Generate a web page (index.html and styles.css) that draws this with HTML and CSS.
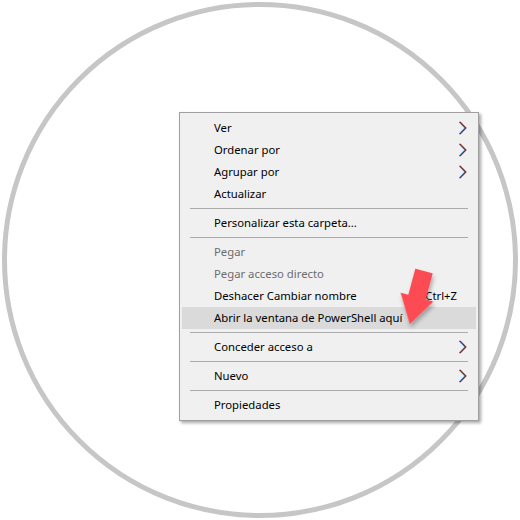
FILE: index.html
```html
<!DOCTYPE html>
<html lang="es">
<head>
  <meta charset="UTF-8" />
  <title>Menú contextual</title>
  <link rel="stylesheet" href="styles.css">
</head>
<body>

<div class="frame">
  <div class="circle">
    <div class="menu">
      <div class="item">
        <span class="label">Ver</span>
        <span class="key"></span>
        <svg class="chev" width="10" height="14" viewBox="0 0 10 14"><polyline points="1.2,0.8 7.2,7 1.2,13.2" class="chev-b"/><polyline points="2,0.8 8,7 2,13.2" class="chev-r"/></svg>
      </div>
      <div class="item">
        <span class="label">Ordenar por</span>
        <span class="key"></span>
        <svg class="chev" width="10" height="14" viewBox="0 0 10 14"><polyline points="1.2,0.8 7.2,7 1.2,13.2" class="chev-b"/><polyline points="2,0.8 8,7 2,13.2" class="chev-r"/></svg>
      </div>
      <div class="item">
        <span class="label">Agrupar por</span>
        <span class="key"></span>
        <svg class="chev" width="10" height="14" viewBox="0 0 10 14"><polyline points="1.2,0.8 7.2,7 1.2,13.2" class="chev-b"/><polyline points="2,0.8 8,7 2,13.2" class="chev-r"/></svg>
      </div>
      <div class="item">
        <span class="label">Actualizar</span>
      </div>
      <div class="sep"></div>
      <div class="item">
        <span class="label">Personalizar esta carpeta...</span>
      </div>
      <div class="sep"></div>
      <div class="item disabled">
        <span class="label">Pegar</span>
      </div>
      <div class="item disabled">
        <span class="label">Pegar acceso directo</span>
      </div>
      <div class="item">
        <span class="label">Deshacer Cambiar nombre</span>
        <span class="key">Ctrl+Z</span>
      </div>
      <div class="item active">
        <span class="label">Abrir la ventana de PowerShell aquí</span>
      </div>
      <div class="sep"></div>
      <div class="item">
        <span class="label">Conceder acceso a</span>
        <span class="key"></span>
        <svg class="chev" width="10" height="14" viewBox="0 0 10 14"><polyline points="1.2,0.8 7.2,7 1.2,13.2" class="chev-b"/><polyline points="2,0.8 8,7 2,13.2" class="chev-r"/></svg>
      </div>
      <div class="sep"></div>
      <div class="item">
        <span class="label">Nuevo</span>
        <span class="key"></span>
        <svg class="chev" width="10" height="14" viewBox="0 0 10 14"><polyline points="1.2,0.8 7.2,7 1.2,13.2" class="chev-b"/><polyline points="2,0.8 8,7 2,13.2" class="chev-r"/></svg>
      </div>
      <div class="sep"></div>
      <div class="item">
        <span class="label">Propiedades</span>
      </div>
    </div>
  </div>

  <!-- flecha roja encima del menú -->
  <svg class="arrow" width="70" height="80" viewBox="0 0 70 80">
    <defs>
      <filter id="sombra" x="-30%" y="-30%" width="160%" height="160%">
        <feDropShadow dx="2" dy="3" stdDeviation="2" flood-color="#000" flood-opacity="0.3"/>
      </filter>
    </defs>
    <g transform="translate(29 7) rotate(15)" filter="url(#sombra)">
      <polygon points="-9,0 9,0 9,27 17,27 0,55 -17,27 -9,27" fill="#fd4b53"/>
    </g>
  </svg>
</div>

</body>
</html>
```

FILE: styles.css
```css
body {
  margin: 0;
  padding: 0;
  background: #ffffff;
  font-family: 'Noto Sans', 'Open Sans', sans-serif;
}

.frame {
  position: relative;
  width: 520px;
  height: 520px;
}

.circle {
  box-sizing: border-box;
  width: 516px;
  height: 516px;
  margin: 2px;
  border: 5px solid #c6c6c6;
  border-radius: 50%;
  background: #fff;
  padding: 105px 0 0 172px;
}

.menu {
  width: 294px;
  background: #f0f0f0;
  border: 1px solid #a0a0a0;
  padding: 4px 2px;
  box-shadow: 2px 2px 3px rgba(0, 0, 0, 0.35);
}

.item {
  box-sizing: border-box;
  display: flex;
  align-items: center;
  height: 22px;
  padding: 0 8px 2px 32px;
  font-size: 11.3px;
  color: #000;
}

.item .label {
  flex-grow: 1;
  white-space: nowrap;
}

.item .key {
  margin-right: 11px;
}

.item.disabled {
  color: #6d6d6d;
}

.item.active {
  background-color: #dadada;
}

.chev {
  margin-top: 2px;
}

.chev polyline {
  fill: none;
  stroke-width: 1.1;
}

.chev-b {
  stroke: #2a8ef0;
}

.chev-r {
  stroke: #7a2a2a;
}

.sep {
  height: 1px;
  margin: 3px 8px;
  background: #ababab;
}

.arrow {
  position: absolute;
  left: 395px;
  top: 262px;
}
```
